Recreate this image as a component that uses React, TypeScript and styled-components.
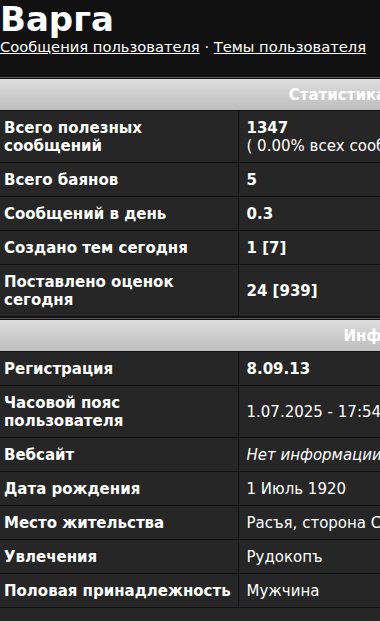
import React from "react";
import styled, { createGlobalStyle } from "styled-components";

const GlobalStyle = createGlobalStyle`
  html, body {
    margin: 0;
    padding: 0;
    background: #111111;
    overflow: hidden;
  }
  body {
    font-family: "DejaVu Sans", Verdana, sans-serif;
    color: #ffffff;
  }
`;

const Page = styled.div`
  width: 100%;
  overflow: hidden;
  background: #111111;
`;

const Profile = styled.div`
  width: 800px;
`;

const Head = styled.div`
  padding: 0 0 21px 0;

  & h1 {
    margin: 0;
    font-size: 34px;
    line-height: 38px;
    font-weight: bold;
    color: #ffffff;
  }
`;

const Links = styled.div`
  font-size: 14.7px;
  line-height: 18px;
  color: #ffffff;
  white-space: nowrap;

  & a {
    color: #ffffff;
    text-decoration: underline;
  }
`;

const Section = styled.div<{ $gap?: boolean }>`
  margin-top: ${(p) => (p.$gap ? "1px" : "0")};
  border-top: 1px solid #5a5a5a;
  padding-top: 1px;
  background: #111111;
`;

const Table = styled.table`
  width: 100%;
  border-collapse: collapse;
  table-layout: fixed;

  & th {
    height: 31px;
    padding: 0;
    background: linear-gradient(#dedede, #bdbdbd);
    color: #ffffff;
    font-size: 15px;
    font-weight: bold;
    text-align: center;
    border-bottom: 1px solid #111111;
  }
`;

const LabelCol = styled.col`
  width: 238px;
`;

const Label = styled.td`
  padding: 8px 4px 7px 4px;
  background: #262626;
  border: 1px solid #111111;
  border-left: none;
  font-size: 15px;
  line-height: 18px;
  font-weight: bold;
  vertical-align: middle;
`;

const Value = styled.td<{ $bold?: boolean; $italic?: boolean }>`
  padding: 8px 8px 7px 8px;
  background: #262626;
  border: 1px solid #111111;
  font-size: 15px;
  line-height: 18px;
  font-weight: ${(p) => (p.$bold ? "bold" : "normal")};
  font-style: ${(p) => (p.$italic ? "italic" : "normal")};
  vertical-align: middle;
  white-space: nowrap;
`;

const Footer = styled.div`
  height: 40px;
  background: #262626;
`;

type Row = { label: string; value: React.ReactNode; bold?: boolean; italic?: boolean };

const stats: Row[] = [
  {
    label: "Всего полезных сообщений",
    value: (
      <>
        <b>1347</b>
        <br />( 0.00% всех сообщений / 0.3 сообщений в день )
      </>
    ),
  },
  { label: "Всего баянов", value: "5", bold: true },
  { label: "Сообщений в день", value: "0.3", bold: true },
  { label: "Создано тем сегодня", value: "1 [7]", bold: true },
  { label: "Поставлено оценок сегодня", value: "24 [939]", bold: true },
];

const info: Row[] = [
  { label: "Регистрация", value: "8.09.13", bold: true },
  { label: "Часовой пояс пользователя", value: "1.07.2025 - 17:54" },
  { label: "Вебсайт", value: "Нет информации", italic: true },
  { label: "Дата рождения", value: "1 Июль 1920" },
  { label: "Место жительства", value: "Расъя, сторона Синяя" },
  { label: "Увлечения", value: "Рудокопъ" },
  { label: "Половая принадлежность", value: "Мужчина" },
];

const Block = ({ title, rows, gap }: { title: string; rows: Row[]; gap?: boolean }) => (
  <Section $gap={gap}>
    <Table>
      <colgroup>
        <LabelCol />
        <col />
      </colgroup>
      <thead>
        <tr>
          <th colSpan={2}>{title}</th>
        </tr>
      </thead>
      <tbody>
        {rows.map((r) => (
          <tr key={r.label}>
            <Label>{r.label}</Label>
            <Value $bold={r.bold} $italic={r.italic}>
              {r.value}
            </Value>
          </tr>
        ))}
      </tbody>
    </Table>
  </Section>
);

const App = () => {
  return (
    <Page>
      <GlobalStyle />
      <Profile>
        <Head>
          <h1>Варга</h1>
          <Links>
            <a href="#">Сообщения пользователя</a> · <a href="#">Темы пользователя</a>
          </Links>
        </Head>
        <Block title="Статистика пользователя" rows={stats} />
        <Block title="Информация" rows={info} gap />
        <Footer />
      </Profile>
    </Page>
  );
};

export default App;
